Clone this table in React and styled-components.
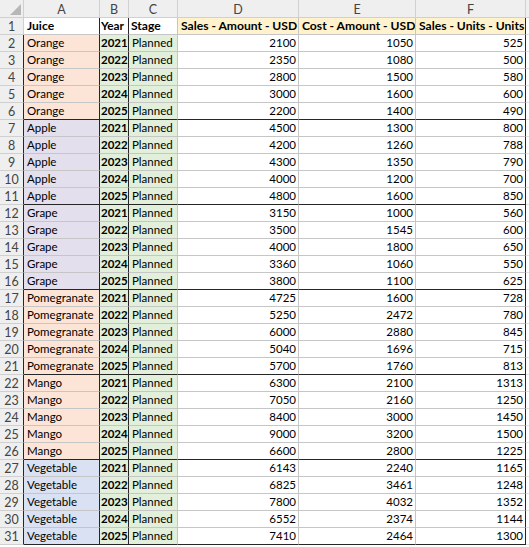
import React from "react";
import styled, { createGlobalStyle } from "styled-components";

const Global = createGlobalStyle`
  html, body { margin: 0; padding: 0; background: #ffffff; }
  body { font-family: Lato, "Noto Sans", sans-serif; }
`;

const COLS = [24, 76, 29, 49, 121, 117, 110];
const DARK = "#262626";
const GRID = "#c6c6c6";
const HEADGRID = "#d0d0d0";

const Sheet = styled.div`
  display: grid;
  grid-template-columns: ${COLS.map((c) => c + "px").join(" ")} 1fr;
  grid-template-rows: 18px repeat(31, 17px) 1fr;
  width: 529px;
  height: 547px;
  overflow: hidden;
  font-size: 11.5px;
  color: #000;
`;

const ColHead = styled.div`
  background: #efefef;
  color: #444;
  display: flex;
  align-items: center;
  justify-content: center;
  border-right: 1px solid ${HEADGRID};
  border-bottom: 1px solid ${HEADGRID};
  box-sizing: border-box;
  font-size: 12.5px;
  padding-top: 1px;
`;

const Corner = styled(ColHead)`
  position: relative;
  svg { position: absolute; right: 2px; bottom: 2px; }
`;

const RowHead = styled.div`
  background: #efefef;
  color: #444;
  display: flex;
  align-items: center;
  justify-content: center;
  border-right: 1px solid ${(p) => (p.$dark ? DARK : HEADGRID)};
  border-bottom: 1px solid ${HEADGRID};
  box-sizing: border-box;
  font-size: 12.5px;
`;

const Cell = styled.div`
  background: ${(p) => p.$bg || "#fff"};
  border-right: 1px solid ${(p) => (p.$darkRight ? DARK : GRID)};
  border-bottom: 1px solid ${(p) => (p.$darkBottom ? DARK : GRID)};
  box-sizing: border-box;
  display: flex;
  align-items: center;
  justify-content: ${(p) => (p.$right ? "flex-end" : "flex-start")};
  padding: 0 2px 0 ${(p) => p.$padLeft || "3px"};
  font-weight: ${(p) => (p.$bold ? 700 : 400)};
  font-size: ${(p) => p.$size || "inherit"};
  white-space: nowrap;
  overflow: hidden;
  line-height: 1;
`;

const Filler = styled.div`
  background: ${(p) => (p.$head ? "#efefef" : "#fff")};
  border-bottom: 1px solid ${(p) => (p.$head ? HEADGRID : "#e1e1e1")};
  box-sizing: border-box;
`;

const groups = [
  { name: "Orange", bg: "#fce4d6", rows: [[2100, 1050, 525], [2350, 1080, 500], [2800, 1500, 580], [3000, 1600, 600], [2200, 1400, 490]] },
  { name: "Apple", bg: "#e4dfec", rows: [[4500, 1300, 800], [4200, 1260, 788], [4300, 1350, 790], [4000, 1200, 700], [4800, 1600, 850]] },
  { name: "Grape", bg: "#e4dfec", rows: [[3150, 1000, 560], [3500, 1545, 600], [4000, 1800, 650], [3360, 1060, 550], [3800, 1100, 625]] },
  { name: "Pomegranate", bg: "#fce4d6", rows: [[4725, 1600, 728], [5250, 2472, 780], [6000, 2880, 845], [5040, 1696, 715], [5700, 1760, 813]] },
  { name: "Mango", bg: "#fce4d6", rows: [[6300, 2100, 1313], [7050, 2160, 1250], [8400, 3000, 1450], [9000, 3200, 1500], [6600, 2800, 1225]] },
  { name: "Vegetable", bg: "#d9e1f2", rows: [[6143, 2240, 1165], [6825, 3461, 1248], [7800, 4032, 1352], [6552, 2374, 1144], [7410, 2464, 1300]] },
];

const GREEN = "#e2efda";
const YELLOW = "#fff2cc";
const HEAD = "12.1px";

export default function App() {
  const cells = [];
  cells.push(
    <Corner key="corner">
      <svg width="11" height="11" viewBox="0 0 11 11">
        <polygon points="11,0 11,11 0,11" fill="#b7b7b7" />
      </svg>
    </Corner>
  );
  ["A", "B", "C", "D", "E", "F"].forEach((l) => cells.push(<ColHead key={"h" + l}>{l}</ColHead>));
  cells.push(<Filler key="hf" $head />);

  cells.push(<RowHead key="r1">1</RowHead>);
  cells.push(<Cell key="1a" $bold $size={HEAD} $darkRight>Juice</Cell>);
  cells.push(<Cell key="1b" $bold $size="11.8px" $darkRight $padLeft="1px">Year</Cell>);
  cells.push(<Cell key="1c" $bold $size={HEAD} $padLeft="2px">Stage</Cell>);
  cells.push(<Cell key="1d" $bold $size={HEAD} $bg={YELLOW}>Sales - Amount - USD</Cell>);
  cells.push(<Cell key="1e" $bold $size={HEAD} $bg={YELLOW}>Cost - Amount - USD</Cell>);
  cells.push(<Cell key="1f" $bold $size={HEAD} $bg={YELLOW} $darkRight>Sales - Units - Units</Cell>);
  cells.push(<Filler key="1x" />);

  let n = 2;
  groups.forEach((g) => {
    g.rows.forEach((r, i) => {
      const last = i === g.rows.length - 1;
      const k = "r" + n;
      cells.push(<RowHead key={k} $dark>{n}</RowHead>);
      cells.push(<Cell key={k + "a"} $bg={g.bg} $darkRight $darkBottom={last}>{g.name}</Cell>);
      cells.push(<Cell key={k + "b"} $bg={GREEN} $bold $size="11.5px" $darkRight $padLeft="1px" $darkBottom={last}>{2021 + i}</Cell>);
      cells.push(<Cell key={k + "c"} $bg={GREEN} $padLeft="3px" $darkBottom={last}>Planned</Cell>);
      cells.push(<Cell key={k + "d"} $right $darkBottom={last}>{r[0]}</Cell>);
      cells.push(<Cell key={k + "e"} $right $darkBottom={last}>{r[1]}</Cell>);
      cells.push(<Cell key={k + "f"} $right $darkRight $darkBottom={last}>{r[2]}</Cell>);
      cells.push(<Filler key={k + "x"} />);
      n++;
    });
  });

  return (
    <>
      <Global />
      <Sheet>{cells}</Sheet>
    </>
  );
}
